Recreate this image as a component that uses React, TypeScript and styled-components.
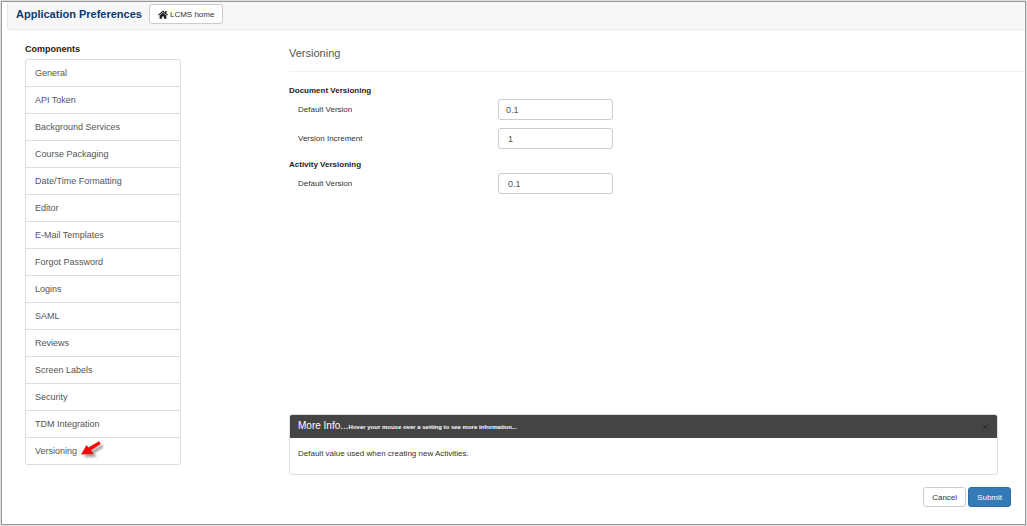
import React from "react";
import styled, { createGlobalStyle } from "styled-components";

const GlobalStyle = createGlobalStyle`
  * { box-sizing: border-box; }
  body {
    margin: 0;
    background: #dedede;
    color: #333;
    font-family: "Liberation Sans", Arial, sans-serif;
    font-size: 8px;
    line-height: 12px;
  }
`;

const Frame = styled.div`
  display: flex;
  flex-direction: column;
  min-height: calc(100vh - 2px);
  margin: 1px;
  padding-left: 5px;
  background: #fff;
  border: 1px solid #999;
`;

const Header = styled.header`
  display: flex;
  align-items: flex-start;
  gap: 7px;
  height: 28px;
  padding: 2px 8px;
  background: #f7f7f7;
  border: solid #e9e9e9;
  border-width: 0 0 1px 1px;
  border-bottom-left-radius: 3px;
`;

const AppTitle = styled.h1`
  margin: 0;
  color: #0a3a70;
  font-size: 11px;
  line-height: 20px;
`;

const Button = styled.button<{ $primary?: boolean }>`
  display: inline-flex;
  align-items: center;
  justify-content: center;
  gap: 2px;
  height: 20px;
  padding: 0 8px;
  border: 1px solid ${(p) => (p.$primary ? "#2e6da4" : "#ccc")};
  border-radius: 3px;
  background: ${(p) => (p.$primary ? "#337ab7" : "#fff")};
  color: ${(p) => (p.$primary ? "#fff" : "#333")};
  font-family: inherit;
  font-size: 8px;
  white-space: nowrap;
  cursor: pointer;
`;

const Body = styled.div`
  display: grid;
  flex: 1;
  grid-template-columns: 156px minmax(0, 1fr);
  column-gap: 108px;
  padding-left: 18px;
`;

const Sidebar = styled.nav`
  padding-top: 13px;
`;

const SidebarTitle = styled.h2`
  margin: 0 0 4px;
  color: #222;
  font-size: 9px;
  line-height: 12px;
`;

const List = styled.ul`
  margin: 0;
  padding: 0;
  list-style: none;
  border: 1px solid #ddd;
  border-radius: 3px;
`;

const Item = styled.li`
  & + & {
    border-top: 1px solid #ddd;
  }
`;

const ItemLink = styled.a`
  display: flex;
  align-items: center;
  gap: 4px;
  height: 26px;
  padding: 0 9px;
  color: #555;
  font-size: 9px;
  text-decoration: none;
`;

const Main = styled.main`
  display: flex;
  flex-direction: column;
`;

const PageTitle = styled.h2`
  margin: 0 0 13px;
  padding: 15px 0 10px;
  border-bottom: 1px solid #f1f1f1;
  color: #555;
  font-size: 11px;
  font-weight: 400;
  line-height: 16px;
`;

const Settings = styled.form`
  display: flex;
  flex: 1;
  flex-direction: column;
`;

const Group = styled.fieldset`
  min-width: 0;
  margin: 0;
  padding: 0 0 10px;
  border: 0;
`;

const Legend = styled.legend`
  padding: 0;
  margin-bottom: 2px;
  color: #222;
  font-size: 8px;
  font-weight: 700;
  line-height: 12px;
`;

const Field = styled.div`
  display: grid;
  grid-template-columns: 200px 115px;
  align-items: center;
  padding-left: 9px;

  & + & {
    margin-top: 8px;
  }
`;

const Label = styled.label`
  color: #333;
`;

const Input = styled.input<{ $indent: number }>`
  width: 100%;
  height: 21px;
  padding: 0 7px 0 ${(p) => p.$indent}px;
  border: 1px solid #ccc;
  border-radius: 3px;
  background: #fff;
  color: #555;
  font-family: inherit;
  font-size: 9px;
`;

const Footer = styled.div`
  margin-top: auto;
  padding: 0 14px 17px 0;
`;

const Panel = styled.section`
  margin-right: 13px;
  border: 1px solid #ddd;
  border-radius: 3px;
  overflow: hidden;
`;

const PanelHead = styled.header`
  display: flex;
  align-items: center;
  justify-content: space-between;
  height: 23px;
  padding: 0 8px;
  background: #444;
  color: #fff;
`;

const PanelTitle = styled.h3`
  margin: 0;
  font-size: 10px;
  font-weight: 400;
  line-height: 14px;
`;

const Hint = styled.small`
  font-size: 6px;
  font-weight: 700;
`;

const Close = styled.button`
  display: flex;
  padding: 0;
  border: 0;
  background: none;
  color: #2b2b2b;
  cursor: pointer;
`;

const PanelText = styled.p`
  margin: 0;
  padding: 10px 8px 14px;
`;

const Actions = styled.div`
  display: flex;
  justify-content: flex-end;
  gap: 2px;
  margin-top: 12px;
`;

const HomeIcon = () => (
  <svg width="10" height="9" viewBox="0 0 20 18" fill="#222" aria-hidden="true">
    <path d="M10 1 0 9.5 1.4 11 10 3.8 18.6 11 20 9.500 17 7V2h-3v2.400z" />
    <path d="M10 5.200 3.200 11v6.500h5V13h3.600v4.500h5V11z" />
  </svg>
);

const ArrowIcon = () => (
  <svg width="24" height="20" viewBox="0 0 24 20" aria-hidden="true">
    <defs>
      <filter id="soft" x="-30%" y="-30%" width="160%" height="160%">
        <feGaussianBlur stdDeviation="0.8" />
      </filter>
    </defs>
    <path
      d="M0 13 6 4.500 7.500 7 18 .5 19.500 3 10 9.500 12.500 13z"
      fill="#777"
      opacity="0.7"
      transform="translate(3 3)"
      filter="url(#soft)"
    />
    <path d="M0 13.500 5.500 4 7.400 6.600 18 .2 19.700 3 10.200 9.300 12.500 13z" fill="#f80808" />
  </svg>
);

const CloseIcon = () => (
  <svg width="8" height="8" viewBox="0 0 8 8" stroke="currentColor" fill="none" aria-hidden="true">
    <path d="M1.500 1.500 6.500 6.500M6.500 1.500 1.500 6.500" />
  </svg>
);

const components = [
  "General",
  "API Token",
  "Background Services",
  "Course Packaging",
  "Date/Time Formatting",
  "Editor",
  "E-Mail Templates",
  "Forgot Password",
  "Logins",
  "SAML",
  "Reviews",
  "Screen Labels",
  "Security",
  "TDM Integration",
  "Versioning",
];

const groups = [
  {
    title: "Document Versioning",
    fields: [
      { id: "doc-default", label: "Default Version", value: "0.1", indent: 7 },
      { id: "doc-increment", label: "Version Increment", value: "1", indent: 9 },
    ],
  },
  {
    title: "Activity Versioning",
    fields: [{ id: "act-default", label: "Default Version", value: "0.1", indent: 9 }],
  },
];

export default function App() {
  return (
    <>
      <GlobalStyle />
      <Frame>
        <Header>
          <AppTitle>Application Preferences</AppTitle>
          <Button type="button">
            <HomeIcon />
            LCMS home
          </Button>
        </Header>
        <Body>
          <Sidebar aria-label="Components">
            <SidebarTitle>Components</SidebarTitle>
            <List>
              {components.map((name) => (
                <Item key={name}>
                  <ItemLink href="#">
                    {name}
                    {name === "Versioning" && <ArrowIcon />}
                  </ItemLink>
                </Item>
              ))}
            </List>
          </Sidebar>
          <Main>
            <PageTitle>Versioning</PageTitle>
            <Settings>
              {groups.map((group) => (
                <Group key={group.title}>
                  <Legend>{group.title}</Legend>
                  {group.fields.map((f) => (
                    <Field key={f.id}>
                      <Label htmlFor={f.id}>{f.label}</Label>
                      <Input id={f.id} type="text" defaultValue={f.value} $indent={f.indent} />
                    </Field>
                  ))}
                </Group>
              ))}
              <Footer>
                <Panel>
                  <PanelHead>
                    <PanelTitle>
                      More Info...
                      <Hint>Hover your mouse over a setting to see more information...</Hint>
                    </PanelTitle>
                    <Close type="button" aria-label="Close">
                      <CloseIcon />
                    </Close>
                  </PanelHead>
                  <PanelText>Default value used when creating new Activities.</PanelText>
                </Panel>
                <Actions>
                  <Button type="button">Cancel</Button>
                  <Button type="submit" $primary>
                    Submit
                  </Button>
                </Actions>
              </Footer>
            </Settings>
          </Main>
        </Body>
      </Frame>
    </>
  );
}
